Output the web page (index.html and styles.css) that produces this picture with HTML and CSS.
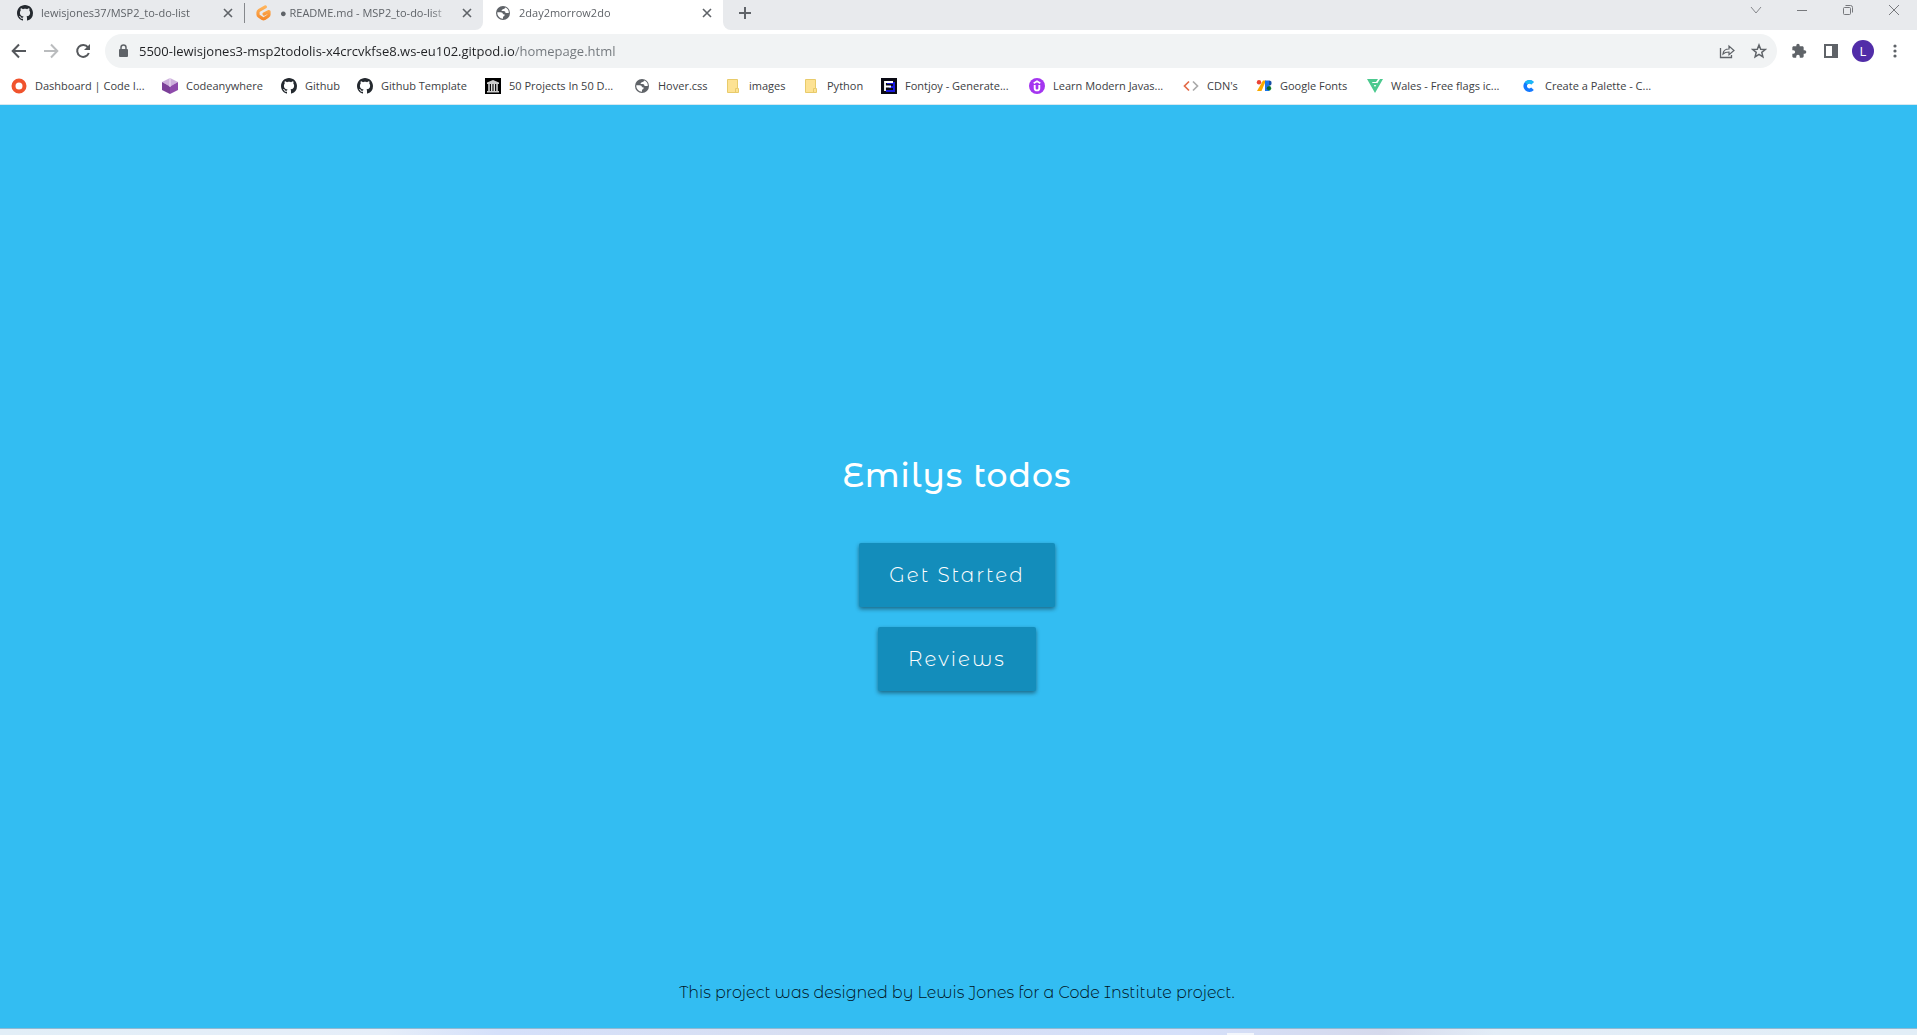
FILE: index.html
```html
<!DOCTYPE html>
<html lang="en">
<head>
<meta charset="utf-8">
<title>2day2morrow2do</title>
<link rel="stylesheet" href="styles.css">
</head>
<body>
<svg class="sprite" aria-hidden="true">
  <symbol id="github" viewBox="0 0 16 16"><path d="M8 0C3.58 0 0 3.58 0 8c0 3.54 2.29 6.53 5.47 7.59.4.07.55-.17.55-.38 0-.19-.01-.82-.01-1.49-2.01.37-2.53-.49-2.69-.94-.09-.23-.48-.94-.82-1.13-.28-.15-.68-.52-.01-.53.63-.01 1.08.58 1.23.82.72 1.21 1.87.87 2.33.66.07-.52.28-.87.51-1.07-1.78-.2-3.64-.89-3.64-3.95 0-.87.31-1.59.82-2.15-.08-.2-.36-1.02.08-2.12 0 0 .67-.21 2.2.82.64-.18 1.32-.27 2-.27s1.36.09 2 .27c1.53-1.04 2.2-.82 2.2-.82.44 1.1.16 1.92.08 2.12.51.56.82 1.27.82 2.15 0 3.07-1.87 3.75-3.65 3.95.29.25.54.73.54 1.48 0 1.07-.01 1.93-.01 2.2 0 .21.15.46.55.38A8.01 8.01 0 0 0 16 8c0-4.42-3.58-8-8-8z" fill="#24292f"/></symbol>
  <symbol id="globe" viewBox="0 0 16 16"><circle cx="8" cy="8" r="7" fill="#5f6368"/><path d="M10.200 2.600C9.800 4 9 4.200 7.800 4.300 7 4.400 7.200 5.600 6.200 6H8.500c1.500 0 2 .9 2 2h3.300c.2-2.500-1.300-4.600-3.600-5.400zM2.300 7.300h3.200c1.700 0 2.400.8 2.500 2h1.500v1.200c0 .8-1 .8-1.500 1.200v2c-3.200 0-6-2.900-5.700-6.400z" fill="#fff"/></symbol>
  <symbol id="folder" viewBox="0 0 16 16"><path d="M2.500 1.500h10v9h1v4h-11z" fill="#fde293" stroke="#e8cb6b"/><path d="M10.500 14v-3.500h2" fill="none" stroke="#e8cb6b"/></symbol>
  <symbol id="cross" viewBox="0 0 16 16"><path d="M4 4l8 8M12 4l-8 8" stroke="#5f6368" stroke-width="1.600" fill="none"/></symbol>
</svg>

<header class="browser">
  <div class="tabstrip">
    <div class="tab">
      <svg class="icon"><use href="#github"/></svg>
      <span class="tab-title">lewisjones37/MSP2_to-do-list</span>
      <button class="plain" aria-label="Close tab"><svg class="icon"><use href="#cross"/></svg></button>
    </div>
    <div class="tab tab-divided">
      <svg class="icon" viewBox="0 0 16 16"><defs><linearGradient id="pod" x2="0" y2="1"><stop stop-color="#ffb45b"/><stop offset="1" stop-color="#f58a2c"/></linearGradient></defs><path d="M9.300 1.900 3.200 5.300Q2 6 2 7.300v2.300q0 1 .9 1.600l3.700 2.500q.9.500 1.800 0l3.700-2.500q.9-.5.900-1.600V6.500L8.100 9" fill="none" stroke="url(#pod)" stroke-width="3.200" stroke-linecap="round" stroke-linejoin="round"/></svg>
      <span class="tab-title">● README.md - MSP2_to-do-list</span>
      <button class="plain" aria-label="Close tab"><svg class="icon"><use href="#cross"/></svg></button>
    </div>
    <div class="tab tab-active">
      <svg class="icon"><use href="#globe"/></svg>
      <span class="tab-title">2day2morrow2do</span>
      <button class="plain" aria-label="Close tab"><svg class="icon"><use href="#cross"/></svg></button>
    </div>
    <div class="strip-end">
      <button class="plain" aria-label="New tab"><svg class="icon" viewBox="0 0 16 16"><path d="M8 2v12M2 8h12" stroke="#5f6368" stroke-width="2"/></svg></button>
      <div class="window-controls">
        <button class="plain" aria-label="Search tabs"><svg class="icon" viewBox="0 0 16 16"><path d="M3 5l5 6 5-6" fill="none" stroke="#85878b"/></svg></button>
        <button class="plain" aria-label="Minimise"><svg class="icon" viewBox="0 0 16 16"><path d="M3 8.500h10" stroke="#77797d"/></svg></button>
        <button class="plain" aria-label="Restore"><svg class="icon" viewBox="0 0 16 16"><rect x="3.500" y="5.500" width="7" height="7" rx="1" fill="none" stroke="#77797d"/><path d="M5.500 3.500h5q2 0 2 2v5" fill="none" stroke="#77797d"/></svg></button>
        <button class="plain" aria-label="Close"><svg class="icon" viewBox="0 0 16 16"><path d="M3 3l10 10M13 3L3 13" stroke="#77797d"/></svg></button>
      </div>
    </div>
  </div>

  <div class="toolbar">
    <div class="nav">
      <button class="plain" aria-label="Back"><svg class="icon" viewBox="0 0 16 16"><path d="M15 8H2M8 1.500 1.700 8 8 14.500" fill="none" stroke="#55585c" stroke-width="2"/></svg></button>
      <button class="plain" aria-label="Forward"><svg class="icon" viewBox="0 0 16 16"><path d="M1 8h13M8 1.500 14.300 8 8 14.500" fill="none" stroke="#babcbe" stroke-width="2"/></svg></button>
      <button class="plain" aria-label="Reload"><svg class="icon" viewBox="0 0 16 16"><path d="M13 4.300A6 6 0 1 0 13.800 10" fill="none" stroke="#55585c" stroke-width="2"/><path d="M15 1v6H9z" fill="#55585c"/></svg></button>
    </div>
    <div class="omnibox">
      <svg class="icon" viewBox="0 0 16 16"><rect x="4" y="6" width="9" height="8" rx="1" fill="#5f6368"/><path d="M6 6.500V4.500a2.500 2.500 0 0 1 5 0v2" fill="none" stroke="#5f6368" stroke-width="1.500"/></svg>
      <input class="url" type="text" aria-label="Address" value="5500-lewisjones3-msp2todolis-x4crcvkfse8.ws-eu102.gitpod.io/homepage.html">
      <button class="plain" aria-label="Share"><svg class="icon" viewBox="0 0 16 16"><path d="M1.500 5v9.500h11V12" fill="none" stroke="#5f6368" stroke-width="1.300"/><path d="M4 11c.3-3.500 2.500-5 6-5V3l5 4.500-5 4.200V9C7.500 9 5.500 9.500 4 11z" fill="none" stroke="#5f6368" stroke-width="1.200"/></svg></button>
      <button class="plain" aria-label="Bookmark"><svg class="icon" viewBox="0 0 16 16"><path d="M8 2l1.700 4.200 4.600.3-3.500 2.900 1.100 4.400L8 11.400l-3.900 2.400 1.100-4.400L1.700 6.500l4.600-.3z" fill="none" stroke="#5f6368" stroke-width="1.500"/></svg></button>
    </div>
    <div class="extensions">
      <button class="plain" aria-label="Extensions"><svg class="icon" viewBox="0 0 24 24"><path d="M20.500 11H19V7c0-1.100-.9-2-2-2h-4V3.500a2.500 2.500 0 0 0-5 0V5H4c-1.100 0-2 .9-2 2v3.800h1.500a2.700 2.700 0 0 1 0 5.400H2V20c0 1.100.9 2 2 2h3.800v-1.500a2.700 2.700 0 0 1 5.400 0V22H17c1.100 0 2-.9 2-2v-4h1.500a2.500 2.500 0 0 0 0-5z" fill="#5f6368"/></svg></button>
      <button class="plain" aria-label="Side panel"><svg class="icon" viewBox="0 0 16 16"><path d="M1 1h14v14H1zM3 3v10h6V3z" fill="#5f6368" fill-rule="evenodd"/></svg></button>
      <button class="plain avatar" aria-label="Profile">L</button>
      <button class="plain" aria-label="Menu"><svg class="icon" viewBox="0 0 16 16" fill="#5f6368"><circle cx="8" cy="3" r="1.600"/><circle cx="8" cy="8" r="1.600"/><circle cx="8" cy="13" r="1.600"/></svg></button>
    </div>
  </div>

  <nav class="bookmarks" aria-label="Bookmarks">
    <a href="#"><svg class="icon" viewBox="0 0 16 16"><circle cx="8" cy="8" r="5.500" fill="none" stroke="#f0532d" stroke-width="4"/></svg>Dashboard | Code I...</a>
    <a href="#"><svg class="icon" viewBox="0 0 16 16"><path d="M8 0l8 4-8 4.500L0 4z" fill="#cdb0dc"/><path d="M0 4l8 4.500V16l-8-4z" fill="#7b3f98"/><path d="M16 4L8 8.500V16l8-4z" fill="#8e4bab"/><path d="M8 0v9" stroke="#efe2f5"/></svg>Codeanywhere</a>
    <a href="#"><svg class="icon"><use href="#github"/></svg>Github</a>
    <a href="#"><svg class="icon"><use href="#github"/></svg>Github Template</a>
    <a href="#"><svg class="icon" viewBox="0 0 16 16"><path d="M0 0h16v16H0z" fill="#000"/><path d="M2 4.500L8 2l6 2.500V6H2zM2 13h12v1.500H2z" fill="#ccc"/><path d="M4 6v7M6.700 6v7M9.300 6v7M12 6v7" stroke="#ddd" stroke-width="1.500"/></svg>50 Projects In 50 D...</a>
    <a href="#"><svg class="icon"><use href="#globe"/></svg>Hover.css</a>
    <a href="#"><svg class="icon"><use href="#folder"/></svg>images</a>
    <a href="#"><svg class="icon"><use href="#folder"/></svg>Python</a>
    <a href="#"><svg class="icon" viewBox="0 0 16 16"><path d="M0 0h16v16H0z" fill="#0a0a14"/><path d="M6 5h7v8H5M8 9h5" fill="none" stroke="#1a1ae0" stroke-width="2"/><path d="M4 13V4h8M4 8.500h6" fill="none" stroke="#fff" stroke-width="1.800"/></svg>Fontjoy - Generate...</a>
    <a href="#"><svg class="icon" viewBox="0 0 16 16"><circle cx="8" cy="8" r="8" fill="#a435f0"/><path d="M5.700 7v3.200q0 2.200 2.300 2.200t2.300-2.200V7" fill="none" stroke="#fff" stroke-width="1.900"/><path d="M4.700 5.200L8 3.200l3.300 2" fill="none" stroke="#fff" stroke-width="1.600"/></svg>Learn Modern Javas...</a>
    <a href="#"><svg class="icon" viewBox="0 0 16 16" fill="none" stroke-width="1.700"><path d="M6 3.500L1.500 8 6 12.500" stroke="#e36b48"/><path d="M10 3.500l4.500 4.500-4.500 4.500" stroke="#aaa"/></svg>CDN's</a>
    <a href="#"><svg class="icon" viewBox="0 0 16 16"><path d="M7 2.500h3L5.500 13H1z" fill="#f9ab00"/><circle cx="3" cy="4.200" r="2.200" fill="#ea4335"/><path d="M9 2.500h4V13H9z" fill="#1a73e8"/><path d="M13 2.500a2.600 2.600 0 0 1 0 5.200z" fill="#174ea6"/><path d="M13 7.500a2.800 2.800 0 0 1 0 5.500z" fill="#34a853"/><circle cx="12.800" cy="10.200" r="2" fill="#0d652d"/></svg>Google Fonts</a>
    <a href="#"><svg class="icon" viewBox="0 0 16 16"><path d="M0 1h11L9 4H5l3 5 5-8h3L8 15z" fill="#4cc98f"/><path d="M5.500 6h5" stroke="#4cc98f" stroke-width="2"/></svg>Wales - Free flags ic...</a>
    <a href="#"><svg class="icon" viewBox="0 0 16 16"><path d="M11.500 5.200A4.200 4.200 0 1 0 11.500 10.800" fill="none" stroke="#1479ff" stroke-width="3.600"/><path d="M11.500 5.200A4.200 4.200 0 0 0 5 5.400" fill="none" stroke="#19b9f5" stroke-width="3.600"/></svg>Create a Palette - C...</a>
  </nav>
</header>

<main class="page">
  <section class="hero">
    <h1>Emilys todos</h1>
    <button class="btn">Get Started</button>
    <button class="btn">Reviews</button>
  </section>
  <footer class="credit">This project was designed by Lewis Jones for a Code Institute project.</footer>
</main>
<div class="taskbar"><span class="taskbar-item"></span></div>
</body>
</html>
```
FILE: styles.css
```css
* {
  box-sizing: border-box;
}

body {
  margin: 0;
  min-height: 100vh;
  display: flex;
  flex-direction: column;
  font-family: "Open Sans", "Noto Sans", sans-serif;
  font-size: 11px;
  color: #3c4043;
}

.sprite {
  display: none;
}

.icon {
  width: 16px;
  height: 16px;
  flex: none;
  display: block;
}

.plain {
  border: 0;
  padding: 0;
  background: none;
  font: inherit;
  flex: none;
}

.browser {
  background: #fff;
  border-bottom: 1px solid #d5e8f0;
}

.tabstrip {
  display: flex;
  height: 30px;
}

.tab {
  display: flex;
  align-items: center;
  gap: 8px;
  width: 240px;
  padding: 0 8px 5px 12px;
  background: #e8eaed;
  color: #5f6368;
}

.tab:first-child {
  width: 244px;
  padding-left: 17px;
}

.tab-divided {
  width: 239px;
  background: linear-gradient(#85888c, #85888c) 0 3px / 1px 20px no-repeat #e8eaed;
  border-bottom-right-radius: 8px;
}

.tab-active {
  background: #fff;
}

.tab-title {
  flex: 1;
  overflow: hidden;
  white-space: nowrap;
  mask-image: linear-gradient(to left, transparent, #000 20px);
}

.strip-end {
  flex: 1;
  display: flex;
  align-items: center;
  justify-content: space-between;
  padding: 0 15px 5px 14px;
  background: #e8eaed;
  border-bottom-left-radius: 8px;
}

.window-controls {
  display: flex;
  gap: 30px;
  padding-bottom: 5px;
}

.toolbar {
  display: flex;
  align-items: center;
  padding: 4px 14px 4px 11px;
}

.nav {
  display: flex;
  gap: 16px;
  margin-right: 14px;
}

.omnibox {
  flex: 1;
  display: flex;
  align-items: center;
  gap: 16px;
  height: 34px;
  padding: 0 10px;
  border-radius: 17px;
  background: #f1f3f4;
}

.url {
  flex: 1;
  margin-left: -8px;
  padding: 0;
  border: 0;
  font: 13px "Open Sans", "Noto Sans", sans-serif;
  color: transparent;
  background: linear-gradient(to right, #202124 376px, #70757a 376px);
  background-clip: text;
}

.extensions {
  display: flex;
  align-items: center;
  gap: 13px;
  margin-left: 14px;
}

.extensions .plain:first-child {
  margin-right: 3px;
}

.avatar {
  width: 22px;
  height: 22px;
  border-radius: 50%;
  background: #512da8;
  color: #fff;
  font-size: 13px;
}

.bookmarks {
  display: grid;
  grid-template-columns: 151px 119px 76px 128px 149px 91px 78px 78px 148px 154px 73px 111px 154px 150px;
  align-items: center;
  height: 32px;
  padding: 0 0 4px 11px;
}

.bookmarks a {
  display: flex;
  align-items: center;
  gap: 8px;
  color: inherit;
  line-height: 16px;
  text-decoration: none;
  white-space: nowrap;
}

.page {
  flex: 1;
  display: flex;
  flex-direction: column;
  padding-right: 3px;
  background: #33bdf2;
  font-family: "Montserrat Alternates", Montserrat, Inter, sans-serif;
  border-bottom: 1px solid #8fb9d3;
}

.hero {
  flex: 1;
  display: flex;
  flex-direction: column;
  align-items: center;
  justify-content: center;
  gap: 20px;
  padding-top: 60px;
}

h1 {
  margin: 0 0 28px;
  color: #fff;
  font-size: 33px;
  line-height: 40px;
  font-weight: 500;
  letter-spacing: 1px;
}

.btn {
  height: 64px;
  padding: 0 30px;
  border: 0;
  border-radius: 2px;
  background: #138dbb;
  box-shadow: 0 2px 4px rgba(0, 0, 0, 0.45);
  color: #fff;
  font: 300 20px "Montserrat Alternates", Montserrat, Inter, sans-serif;
  letter-spacing: 2px;
}

.credit {
  padding: 1px 20px 23px;
  color: #00121c;
  text-align: center;
  font-size: 16px;
  line-height: 24px;
  font-weight: 300;
}

.taskbar {
  display: flex;
  align-items: flex-end;
  height: 6px;
  padding-left: 64%;
  background: linear-gradient(to right, #e2eef7, #e6eef9 20%, #d5e0fa 26%, #d8dff2 42%, #d5e0fa 62%, #d5d9ec 72%, #e3edf7 78%, #e2eef7);
}

.taskbar-item {
  width: 27px;
  height: 2px;
  background: #f3f6fc;
}
```
